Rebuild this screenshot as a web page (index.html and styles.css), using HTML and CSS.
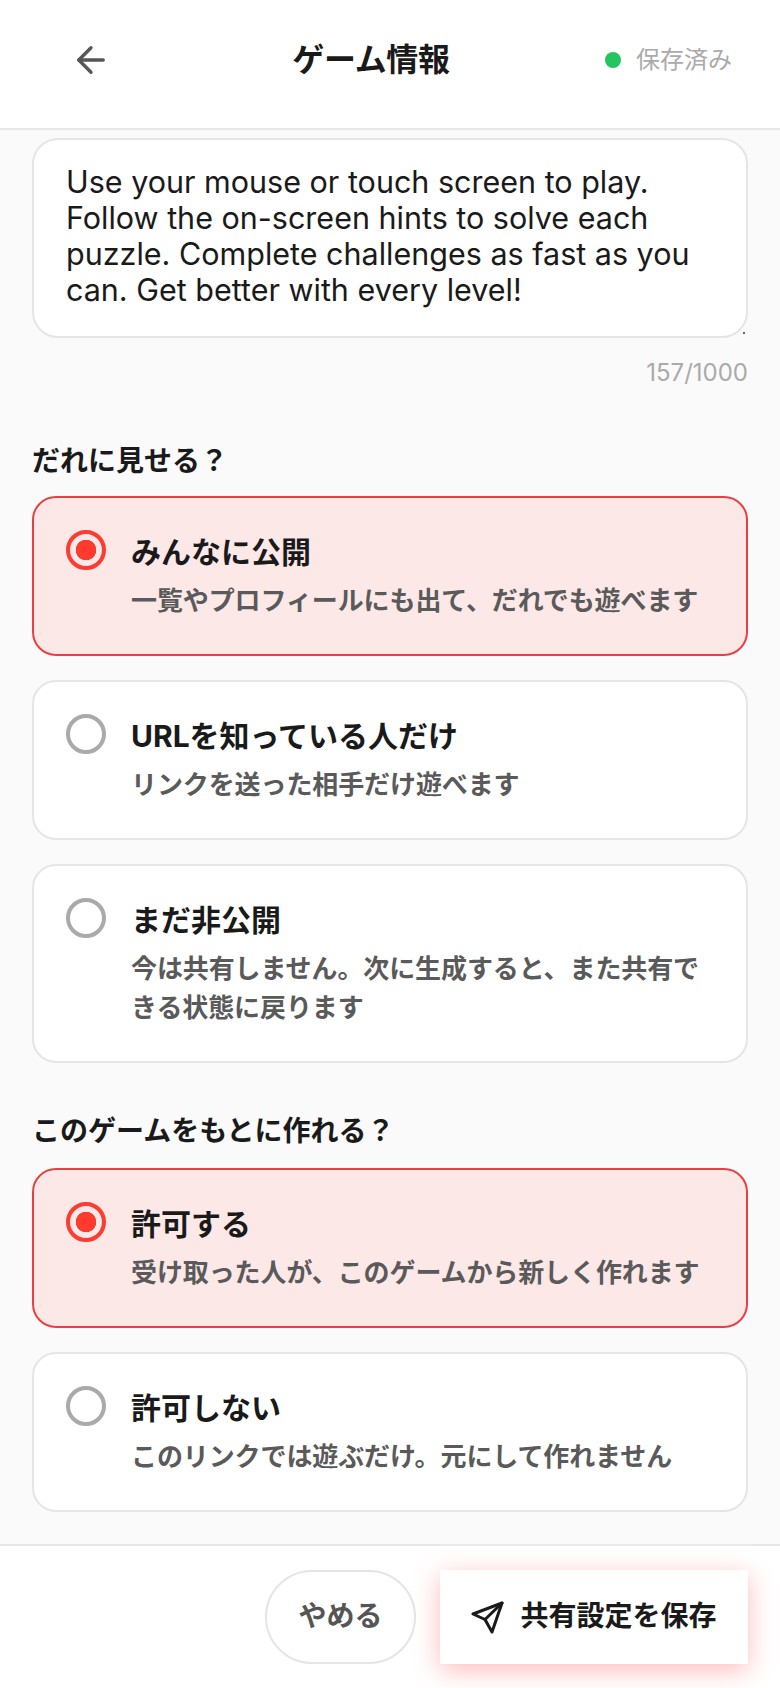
FILE: index.html
```html
<!DOCTYPE html>
<html lang="ja">
<head>
<meta charset="utf-8">
<title>ゲーム情報</title>
<link rel="stylesheet" href="styles.css">
</head>
<body>
<div class="app">
  <header class="top">
    <button class="back" aria-label="戻る">
      <svg viewBox="0 0 24 24" width="42" height="42" fill="none" stroke="#555" stroke-width="1.9" stroke-linecap="round" stroke-linejoin="round"><path d="M12 19l-7-7 7-7"/><path d="M19 12H5"/></svg>
    </button>
    <h1 class="title">ゲーム情報</h1>
    <div class="saved"><span class="dot"></span><span class="saved-text">保存済み</span></div>
  </header>
  <main class="content">
    <div class="textbox">Use your mouse or touch screen to play. Follow the on-screen hints to solve each puzzle. Complete challenges as fast as you can. Get better with every level!<span class="grip"></span></div>
    <div class="count">157/1000</div>

    <h2 class="label">だれに見せる？</h2>
    <div class="options">
      <div class="opt on"><span class="radio"></span><div class="txt"><div class="name">みんなに公開</div><div class="desc">一覧やプロフィールにも出て、だれでも遊べます</div></div></div>
      <div class="opt"><span class="radio"></span><div class="txt"><div class="name">URLを知っている人だけ</div><div class="desc">リンクを送った相手だけ遊べます</div></div></div>
      <div class="opt"><span class="radio"></span><div class="txt"><div class="name">まだ非公開</div><div class="desc">今は共有しません。次に生成すると、また共有できる状態に戻ります</div></div></div>
    </div>

    <h2 class="label second">このゲームをもとに作れる？</h2>
    <div class="options">
      <div class="opt on"><span class="radio"></span><div class="txt"><div class="name">許可する</div><div class="desc">受け取った人が、このゲームから新しく作れます</div></div></div>
      <div class="opt"><span class="radio"></span><div class="txt"><div class="name">許可しない</div><div class="desc">このリンクでは遊ぶだけ。元にして作れません</div></div></div>
    </div>
  </main>
  <footer class="bottom">
    <button class="cancel">やめる</button>
    <button class="save">
      <svg viewBox="0 0 33 33" width="33" height="33" fill="none" stroke="#1a1a1a" stroke-width="3" stroke-linecap="round" stroke-linejoin="round"><path d="M31 2L2 13l12 5.5L21 31z"/><path d="M31 2L14 18.5"/></svg>
      <span class="save-text">共有設定を保存</span>
    </button>
  </footer>
</div>
</body>
</html>
```
FILE: styles.css
```css
* { box-sizing: border-box; }
html, body { margin: 0; padding: 0; }
body {
  font-family: Inter, "Noto Sans CJK JP", sans-serif;
  color: #1a1a1a;
  background: #fafafa;
}
button { font: inherit; color: inherit; padding: 0; }
.app { width: 780px; height: 1688px; display: flex; flex-direction: column; overflow: hidden; }

.top {
  height: 130px;
  flex: none;
  background: #fff;
  border-bottom: 2px solid #e8e8e8;
  display: flex;
  align-items: center;
  justify-content: space-between;
  padding: 0 48px 8px 64px;
}
.back { width: 73px; height: 48px; background: none; border: 0; display: flex; align-items: center; padding-left: 6px; }
.title { margin: 0; font-size: 32px; line-height: 40px; font-weight: 700; letter-spacing: -0.3px; }
.saved { display: flex; align-items: center; gap: 15px; font-size: 24px; color: #aaa; }
.saved-text { margin-bottom: 5px; }
.dot { width: 16px; height: 16px; border-radius: 50%; background: #22c55e; }

.content { flex: 1; padding: 8px 32px 0; min-height: 0; }
.textbox {
  position: relative;
  height: 200px;
  background: #fff;
  border: 2px solid #e5e5e5;
  border-radius: 26px;
  padding: 24px 32px;
  font-size: 30.5px;
  line-height: 36px;
}
.grip { position: absolute; right: 1px; bottom: 2px; width: 2px; height: 2px; background: #666; }
.count { text-align: right; font-size: 24px; line-height: 30px; color: #aaa; margin-top: 20px; }

.label { margin: 55px 0 0; font-size: 28px; line-height: 36px; font-weight: 700; }
.label.second { margin-top: 50px; padding-bottom: 2px; }
.options { display: flex; flex-direction: column; gap: 24px; margin-top: 17px; }
.opt {
  display: flex;
  gap: 25px;
  background: #fff;
  border: 2px solid #e5e5e5;
  border-radius: 24px;
  padding: 32px 32px 34px;
}
.opt.on { background: #fde8e8; border-color: #e84040; }
.radio {
  flex: none;
  width: 40px;
  height: 40px;
  border-radius: 50%;
  border: 4px solid #aaa;
  background: #fff;
}
.opt.on .radio { border-color: #ff3b30; background: radial-gradient(circle, #ff3b30 0 10px, transparent 10.5px); }
.txt { flex: 1; min-width: 0; }
.name { font-size: 30px; line-height: 44px; font-weight: 700; }
.desc { font-size: 26px; line-height: 39px; font-weight: 600; color: #5a5a5a; margin-top: 7px; letter-spacing: -0.1px; }

.bottom {
  height: 144px;
  flex: none;
  background: #fff;
  border-top: 2px solid #e8e8e8;
  display: flex;
  justify-content: flex-end;
  align-items: flex-start;
  gap: 24px;
  padding: 24px 32px 0;
}
.cancel {
  width: 151px;
  height: 94px;
  padding-bottom: 6px;
  background: #fff;
  border: 2px solid #e5e5e5;
  border-radius: 47px;
  font-size: 28px;
  font-weight: 700;
  color: #555;
}
.save {
  width: 308px;
  height: 94px;
  background: #fff;
  border: 0;
  display: flex;
  align-items: center;
  justify-content: center;
  gap: 16px;
  font-size: 28px;
  font-weight: 700;
  box-shadow: 0 6px 24px rgba(255, 60, 60, 0.35);
}
.save-text { margin-bottom: 6px; }
```
